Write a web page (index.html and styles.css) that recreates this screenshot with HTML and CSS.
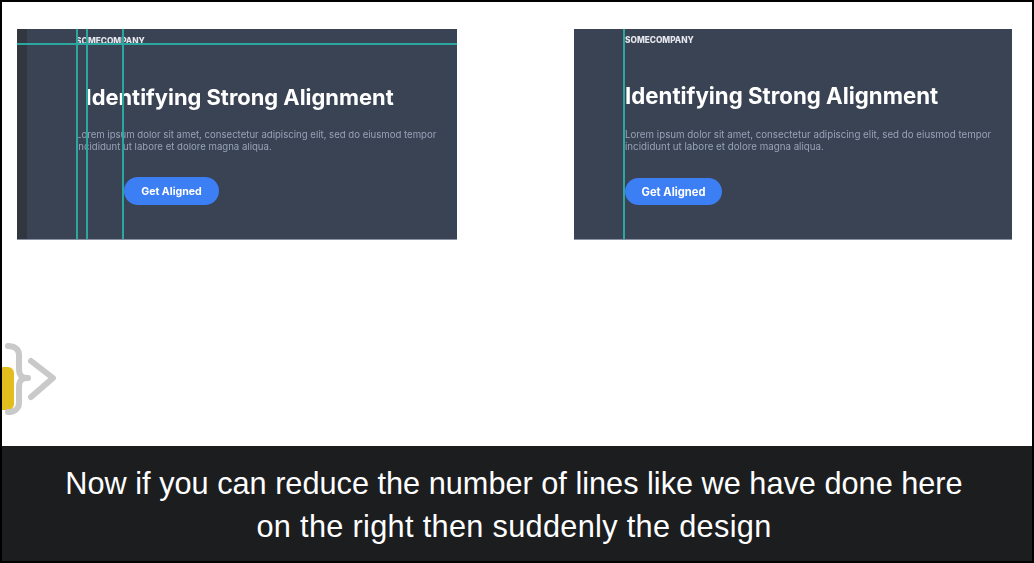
FILE: index.html
```html
<!DOCTYPE html>
<html lang="en">
<head>
<meta charset="utf-8">
<title>Alignment lesson</title>
<link rel="stylesheet" href="styles.css">
</head>
<body>
<main class="frame">
  <section class="stage">
    <div class="slides">
      <article class="slide slide-messy">
        <span class="strip"></span>
        <p class="brand">SOMECOMPANY</p>
        <h1 class="title">Identifying Strong Alignment</h1>
        <p class="copy">Lorem ipsum dolor sit amet, consectetur adipiscing elit, sed do eiusmod tempor incididunt ut labore et dolore magna aliqua.</p>
        <a class="cta">Get Aligned</a>
        <span class="guide guide-h"></span>
        <span class="guide guide-b"></span>
        <span class="guide guide-c"></span>
        <span class="guide guide-d"></span>
      </article>
      <article class="slide slide-clean">
        <p class="brand">SOMECOMPANY</p>
        <h1 class="title">Identifying Strong Alignment</h1>
        <p class="copy">Lorem ipsum dolor sit amet, consectetur adipiscing elit, sed do eiusmod tempor incididunt ut labore et dolore magna aliqua.</p>
        <a class="cta">Get Aligned</a>
        <span class="guide guide-a"></span>
      </article>
    </div>
    <div class="mark">
      <span class="mark-pill"></span>
      <svg class="mark-svg" width="56" height="76" viewBox="0 0 56 76" fill="none" stroke="#c9c9c9" stroke-width="6" stroke-linecap="round" stroke-linejoin="round">
        <path d="M6 3c6 0 11 3 11 9v14c0 6 2 9 9 9-7 0-9 3-9 9v16c0 6-5 9-11 9"/>
        <path d="M29 18l22 17-22 19"/>
      </svg>
    </div>
  </section>
  <footer class="caption">
    <p>Now if you can reduce the number of lines like we have done here</p>
    <p class="caption-second">on the right then suddenly the design</p>
  </footer>
</main>
</body>
</html>
```
FILE: styles.css
```css
* { box-sizing: border-box; }
html, body { margin: 0; padding: 0; height: 100%; background: #fff; }
.frame {
  width: 1034px; height: 563px;
  border: 2px solid #000;
  display: flex; flex-direction: column;
  overflow: hidden;
}
.stage { flex: 1; position: relative; padding: 27px 20px 0 15px; }
.slides { display: flex; justify-content: space-between; }
.slide {
  position: relative;
  height: 211px;
  background: #3a4354;
  border-bottom: 1px solid #8b93a3;
  font-family: Inter, "Liberation Sans", sans-serif;
  overflow: hidden;
}
.slide-messy { width: 440px; }
.slide-clean { width: 438px; }
.strip { position: absolute; left: 0; top: 0; bottom: 0; width: 10px; background: #32373f; }
.brand { margin: 0; font-weight: 800; line-height: 10px; color: #e6e8ee; white-space: nowrap; filter: blur(.35px); }
.title { margin: 0; font-weight: 700; line-height: 28px; color: #fff; white-space: nowrap; filter: blur(.4px); }
.copy { margin: 0; line-height: 12px; color: #98a3b8; filter: blur(.4px); }
.cta {
  display: flex; align-items: center; justify-content: center;
  border-radius: 14px; background: #3c7ef3; color: #fff;
  font-weight: 700; filter: blur(.3px);
}
.slide-messy { padding: 7px 0 0 59px; }
.slide-messy .brand { font-size: 8.3px; }
.slide-messy .title { margin: 37px 0 0 9.5px; font-size: 21.9px; }
.slide-messy .copy { margin-top: 18px; font-size: 9.6px; width: 372px; }
.slide-messy .cta { width: 95px; height: 28px; margin: 24px 0 0 48px; font-size: 10.6px; }
.slide-clean { padding: 6px 0 0 51px; }
.slide-clean .brand { font-size: 8.3px; }
.slide-clean .title { margin-top: 37px; font-size: 22.25px; }
.slide-clean .copy { margin-top: 19px; font-size: 9.75px; width: 376px; }
.slide-clean .cta { width: 97px; height: 27px; margin-top: 25px; font-size: 11.2px; }
.guide { position: absolute; background: #2aa8a0; }
.guide-h { left: 0; right: 0; top: 14px; height: 2px; }
.guide-a, .guide-b, .guide-c, .guide-d { top: 0; bottom: 0; width: 2px; }
.slide-messy .guide-b { left: 59px; }
.slide-messy .guide-c { left: 69px; }
.slide-messy .guide-d { left: 105px; }
.slide-clean .guide-a { left: 49px; }
.mark { position: absolute; left: 0; top: 341px; width: 56px; height: 76px; }
.mark-pill { position: absolute; left: 0; top: 24px; width: 12px; height: 43px; background: #e2bd1e; border-radius: 0 6px 6px 0; }
.mark-svg { position: absolute; left: 0; top: 0; }
.caption {
  height: 115px; padding: 2px 6px 0 0; background: #1c1d1f; color: #fff;
  font-family: "Liberation Sans", Arial, sans-serif;
  display: flex; flex-direction: column; align-items: center; justify-content: center;
  font-size: 30.7px; line-height: 43px;
}
.caption p { margin: 0; }
.caption-second { letter-spacing: .32px; }
```
